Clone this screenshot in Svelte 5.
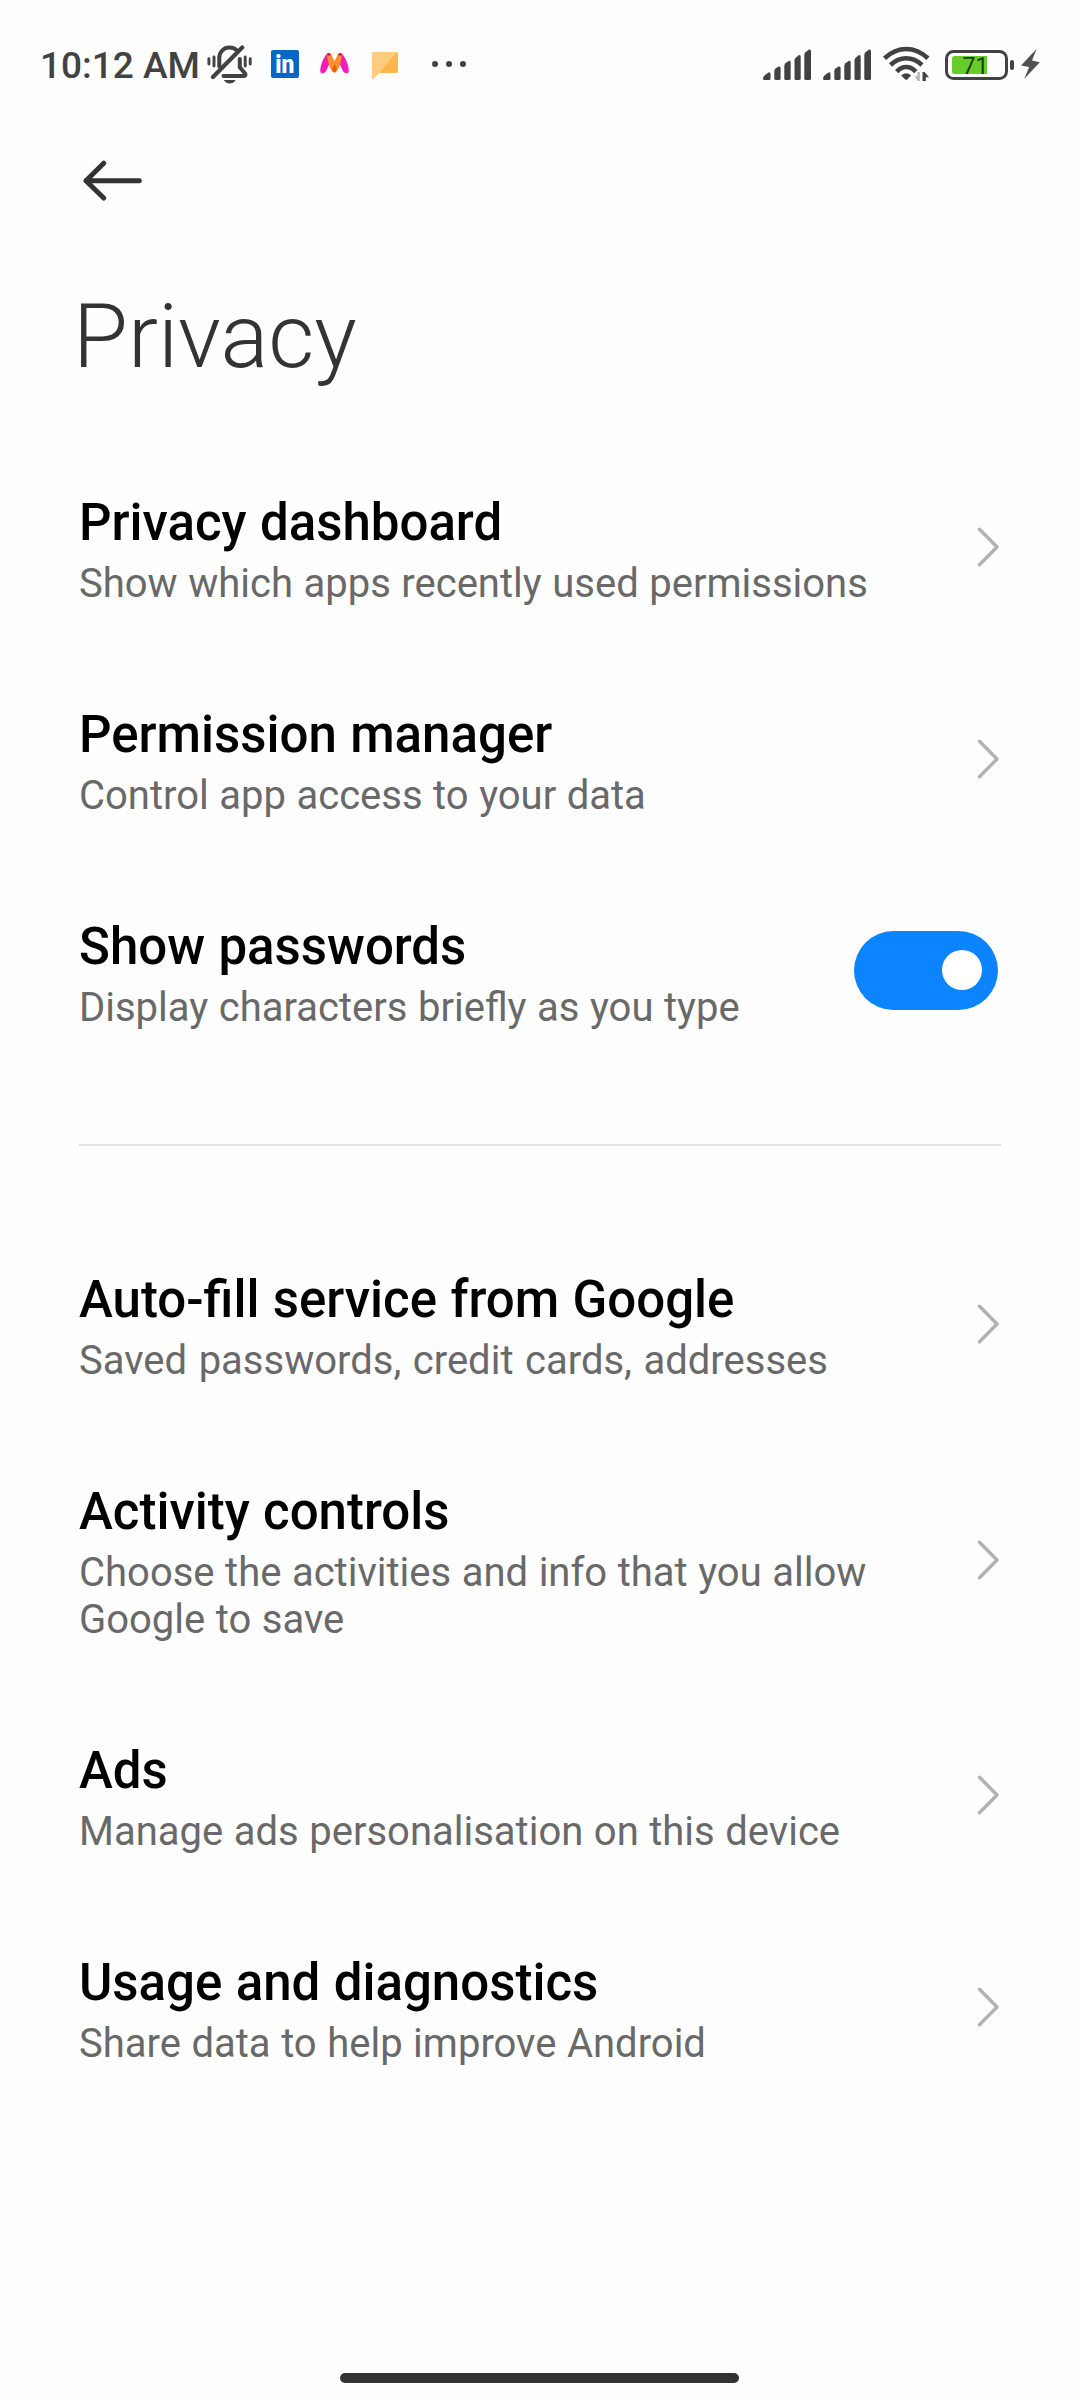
<script>
  let showPasswords = $state(true);

  const groups = [
    [
      { title: 'Privacy dashboard', lines: ['Show which apps recently used permissions'] },
      { title: 'Permission manager', lines: ['Control app access to your data'] },
      { title: 'Show passwords', lines: ['Display characters briefly as you type'], toggle: true }
    ],
    [
      { title: 'Auto-fill service from Google', lines: ['Saved passwords, credit cards, addresses'], loose: true },
      { title: 'Activity controls', lines: ['Choose the activities and info that you allow', 'Google to save'] },
      { title: 'Ads', lines: ['Manage ads personalisation on this device'] },
      { title: 'Usage and diagnostics', lines: ['Share data to help improve Android'] }
    ]
  ];
</script>

{#snippet signal()}
  <svg class="signal" width="48" height="32" viewBox="0 0 48 32" fill="#424242">
    <path d="M0 29.5Q0 27.5 2 26L5.5 23.5Q7.5 22.8 7.5 25V29.5Q7.5 31 6 31H1.5Q0 31 0 29.5Z" />
    <path d="M11.3 22Q11.3 20.5 12.5 19.5L15.5 17.6Q17.6 16.8 17.6 19V29.5Q17.6 31 16 31H13Q11.3 31 11.3 29.5Z" />
    <path d="M21.3 17Q21.3 15.5 22.5 14.3L25.5 12Q27.7 11 27.7 13.5V29.5Q27.7 31 26.2 31H23Q21.3 31 21.3 29.5Z" />
    <path d="M31.5 11.5Q31.5 10 32.7 8.8L35.6 6.3Q37.7 5.3 37.7 8V29.5Q37.7 31 36.2 31H33Q31.5 31 31.5 29.5Z" />
    <path d="M41.3 6Q41.3 4.5 42.5 3.2L45.6 .8Q48 -.4 48 2.5V29.5Q48 31 46.5 31H43Q41.3 31 41.3 29.5Z" />
  </svg>
{/snippet}

<main class="screen">
  <header class="status">
    <span class="clock">10:12 AM</span>
    <svg class="bell" width="46" height="40" viewBox="0 0 46 40" fill="none" stroke="#424242" stroke-width="3" stroke-linecap="round">
      <path d="M1.9 13.7V19M7 12V21M38.2 12V21M43.2 13.7V19" stroke-width="2.9" />
      <path d="M12.3 21.5V13.2C12.3 6.5 17 2.5 22.3 2.5C25.6 2.5 28 3.5 29.8 5.3" stroke-width="4" />
      <path d="M35.2 2.6L6 32" stroke-width="4.2" />
      <path d="M32.8 14V22.2L38.3 28.8Q39 31 36.5 31H16.5" stroke-width="4" />
      <path d="M16.8 35H28.8Q26.5 38.6 22.8 38.6T16.8 35Z" fill="#424242" stroke="none" />
    </svg>
    <svg class="linkedin" width="28" height="28" viewBox="0 0 28 28">
      <rect width="28" height="28" rx="2" fill="#0a66c2" />
      <text x="4.2" y="23.3" textLength="19" lengthAdjust="spacingAndGlyphs">in</text>
    </svg>
    <svg class="myntra" width="32" height="24" viewBox="0 0 32 24">
      <path d="M1.5 20.5C0 16 5 4.5 8.2 1.6Q10.2 0 12.3 2.8L13.2 6L6.8 19.5Q4.5 22.5 1.5 20.5Z" fill="#f81ab6" />
      <path d="M29.5 20.5C31 16 26 4.5 22.8 1.6Q20.8 0 18.7 2.8L17.8 6L24.2 19.5Q26.5 22.5 29.5 20.5Z" fill="#f81ab6" />
      <path d="M8.5 1.5Q11 .4 12.5 3L15.5 9.3L18.5 3Q20 .4 22.5 1.5C23.7 4.5 20 20.5 15.5 20.5S7.3 4.5 8.5 1.5Z" fill="#fd9028" />
      <path d="M15.5 12.2Q18.3 15.5 17.7 18.5Q17 20.6 15.5 20.6T13.3 18.5Q12.7 15.5 15.5 12.2Z" fill="#f05a18" />
      <path d="M7.8 2Q10 .3 12 2.6L9.9 3.9ZM23.2 2Q21 .3 19 2.6L21.1 3.9Z" fill="#c41534" />
    </svg>
    <svg class="note" width="26" height="29" viewBox="0 0 26 29">
      <path d="M2 1H24Q26 1 26 3V20Q26 22 24 22H7L.8 28.2L0 27V3Q0 1 2 1Z" fill="#ffb74d" />
      <path d="M2 1H24.8L7 22L.8 28.2L0 27V3Q0 1 2 1Z" fill="#ffcc80" />
    </svg>
    <svg class="more" width="34" height="6" viewBox="0 0 34 6" fill="#424242">
      <circle cx="3" cy="3" r="3" /><circle cx="17" cy="3" r="3" /><circle cx="31" cy="3" r="3" />
    </svg>
    <span class="spacer"></span>
    {@render signal()}
    {@render signal()}
    <svg class="wifi" width="47" height="36" viewBox="0 0 47 36" fill="none" stroke="#424242" stroke-width="4.6">
      <path d="M1.5 12.3Q11.5 3 23.2 3T45 12.3" />
      <path d="M7.5 19Q14.5 12.3 23.2 12.3T39 19" />
      <path d="M13.7 25.6Q18 21 23.2 21T32.8 25.6" />
      <path d="M18.2 29.5Q23.2 25 28.2 29.5L24.2 33.6Q23.2 34.3 22.2 33.6Z" fill="#424242" stroke="none" />
      <path d="M36.8 26V35H34.8L31.6 30.3H34.5V26Z" fill="#b5b5b5" stroke="none" />
      <path d="M39.5 35V26H41.6L46 31.2H42.8V35Z" fill="#424242" stroke="none" />
    </svg>
    <svg class="battery" width="70" height="30" viewBox="0 0 70 30">
      <rect x="1.5" y="1.5" width="60" height="27" rx="7" fill="none" stroke="#424242" stroke-width="3" />
      <path d="M42 6V24H9.5Q7 24 7 21.5V8.5Q7 6 9.5 6Z" fill="#66cc2a" />
      <rect x="65" y="10" width="4" height="10" rx="2" fill="#424242" />
      <text x="17.6" y="24.2">71</text>
    </svg>
    <svg class="bolt" width="19" height="30" viewBox="0 0 19 30">
      <path d="M15.5 0L0 16.5L8.2 18L3.2 30L18.8 13.2L11 11.5Z" fill="#505050" />
    </svg>
  </header>

  <nav class="nav">
    <button class="back" aria-label="Back">
      <svg width="60" height="42" viewBox="0 0 60 42" fill="none" stroke="#333" stroke-width="5" stroke-linecap="round" stroke-linejoin="round">
        <path d="M20.7 3.2L3 20.7L20.7 38M3 20.7H56.3" />
      </svg>
    </button>
  </nav>

  <h1>Privacy</h1>

  {#each groups as group, g}
    {#if g > 0}<hr />{/if}
    <section>
      {#each group as item}
        <div class="row">
          <div class="label">
            <h2>{item.title}</h2>
            {#each item.lines as line}<p class:loose={item.loose}>{line}</p>{/each}
          </div>
          {#if item.toggle}
            <button
              class="switch"
              class:on={showPasswords}
              role="switch"
              aria-checked={showPasswords}
              aria-label={item.title}
              onclick={() => (showPasswords = !showPasswords)}
            ><span class="knob"></span></button>
          {:else}
            <svg class="chevron" width="22" height="42" viewBox="0 0 22 42" fill="none" stroke="#b2b2b2" stroke-width="3.4" stroke-linecap="round" stroke-linejoin="round">
              <path d="M2.5 3.2L20 21L2.5 38.8" />
            </svg>
          {/if}
        </div>
      {/each}
    </section>
  {/each}

  <footer><span class="home"></span></footer>
</main>

<style>
  :global(body) { background: #fefefe; }
  .screen {
    width: 1080px;
    height: 2400px;
    box-sizing: border-box;
    display: flex;
    flex-direction: column;
    background: #fefefe;
    font-family: Roboto, "Noto Sans", sans-serif;
    overflow: hidden;
  }
  svg { display: block; flex: none; }
  button { padding: 0; border: 0; background: none; display: flex; }
  .status {
    height: 128px;
    box-sizing: border-box;
    padding: 0 40px;
    display: flex;
    align-items: center;
    flex: none;
  }
  .clock {
    width: 167px;
    font-size: 37px;
    line-height: 44px;
    font-weight: 500;
    color: #424242;
    white-space: nowrap;
    margin-top: 4px;
  }
  .bell { margin-top: 1px; }
  .linkedin { margin-left: 18px; }
  .linkedin text { font: 900 25px Roboto, sans-serif; fill: #fff; }
  .myntra { margin-left: 20px; }
  .note { margin: 2px 0 0 21px; }
  .more { margin: 0 0 0 34px; }
  .spacer { flex: 1; }
  .signal { margin: 2px 12px 0 0; }
  .wifi { margin-right: 15px; }
  .battery { margin: 1px 6px 0 0; }
  .battery text { font: 400 23px Roboto, sans-serif; fill: #1d3b0c; }
  .nav { height: 105px; padding-left: 83px; display: flex; align-items: center; flex: none; }
  h1 {
    height: 208px;
    padding-left: 73px;
    margin: 0;
    font-size: 89.3px;
    line-height: 208px;
    font-weight: 300;
    color: #333;
    flex: none;
  }
  .row {
    display: flex;
    align-items: center;
    justify-content: space-between;
    padding: 0 81px 0 79px;
  }
  .label { padding: 53px 0 46px; }
  h2 { margin: 0 0 8px; font-size: 51px; line-height: 58px; font-weight: 500; color: #000; white-space: nowrap; word-spacing: 0.7px; }
  p { margin: 0; font-size: 40px; line-height: 47px; color: #696969; white-space: nowrap; word-spacing: 0.6px; }
  p.loose { word-spacing: 1.6px; }
  .switch {
    width: 144px;
    height: 79px;
    border-radius: 40px;
    background: #d9d9d9;
    align-items: center;
    box-sizing: border-box;
    padding: 0 16px;
    margin: 0 1px 2px 0;
  }
  .switch.on { background: #0d84ff; justify-content: flex-end; }
  .knob { width: 40px; height: 40px; border-radius: 50%; background: #fff; }
  hr { margin: 67px 79px 72px; border: 0; height: 2px; background: #e5e5e5; flex: none; }
  footer { margin-top: auto; height: 27px; padding-right: 1px; display: flex; justify-content: center; }
  .home { width: 399px; height: 10px; border-radius: 5px; background: #333; }
</style>
